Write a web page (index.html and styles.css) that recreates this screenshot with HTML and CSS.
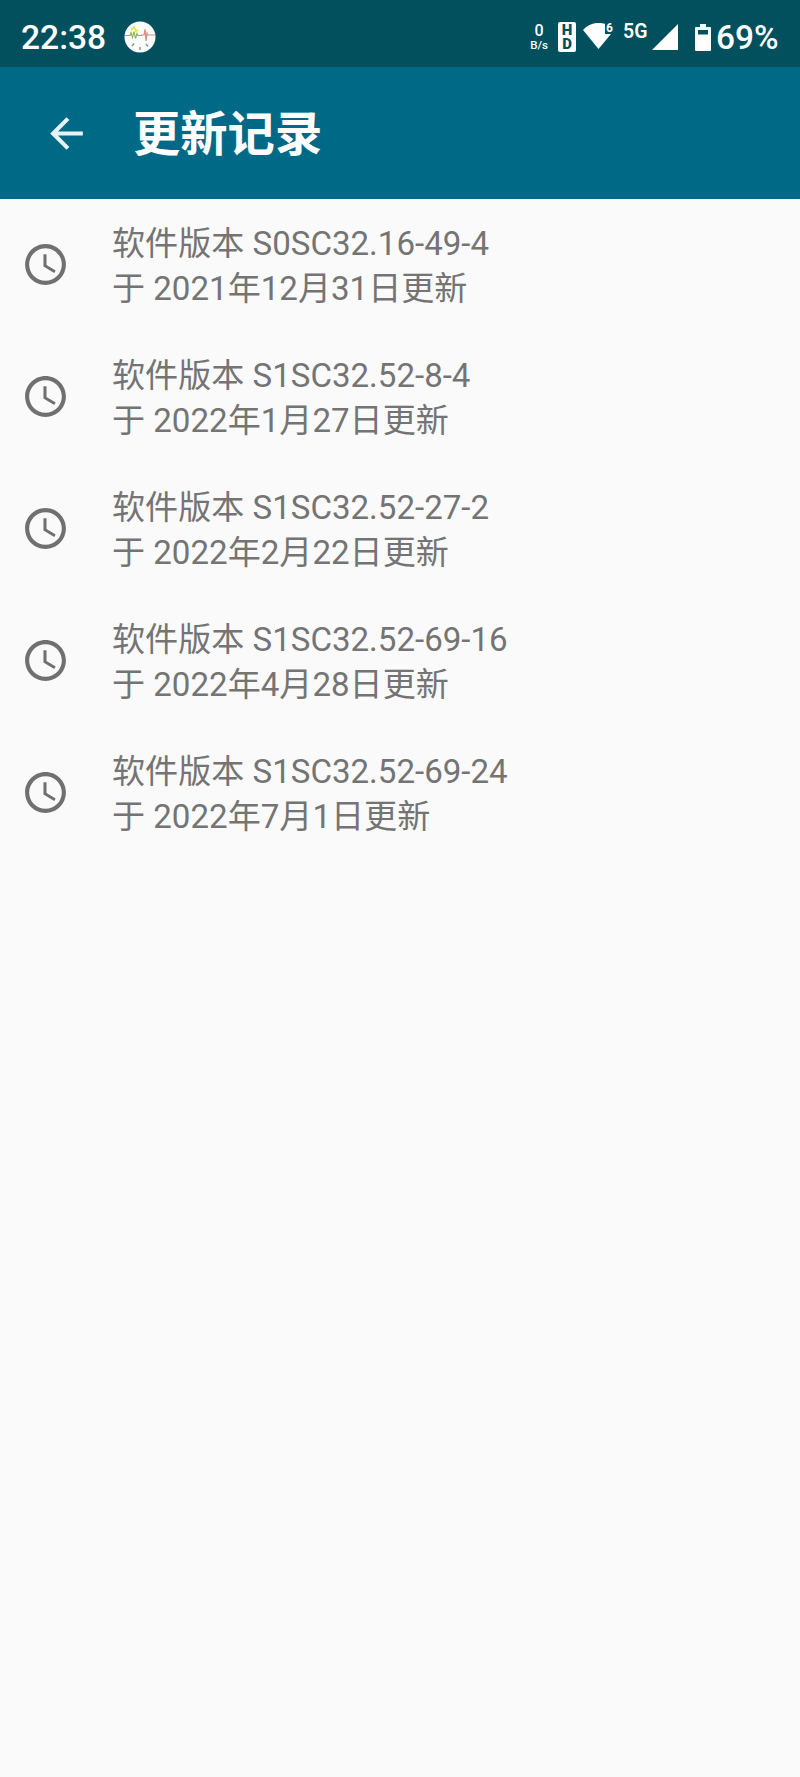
FILE: index.html
```html
<!DOCTYPE html>
<html lang="zh-CN">
<head>
<meta charset="utf-8">
<title>更新记录</title>
<link rel="stylesheet" href="styles.css">
</head>
<body>
<svg width="0" height="0" class="defs">
  <symbol id="clock" viewBox="0 0 24 24">
    <path d="M11.99 2C6.47 2 2 6.48 2 12s4.47 10 9.99 10C17.52 22 22 17.52 22 12S17.52 2 11.99 2zM12 20c-4.42 0-8-3.58-8-8s3.58-8 8-8 8 3.58 8 8-3.58 8-8 8z"/>
    <path d="M12.5 7H11v6l5.25 3.15.75-1.23-4.5-2.67z"/>
  </symbol>
</svg>
<header class="status-bar">
  <span class="time">22:38</span>
  <svg class="app-dot" viewBox="0 0 32 32">
    <circle cx="16" cy="16" r="15.500" fill="#fafcfa"/>
    <path d="M1 14.500h5l1-3 1.500 5 1.500-6 1.500 7 1.500-5 1 2h4" fill="none" stroke="#8fb54a" stroke-width="1.100"/>
    <path d="M7 9l3-3 2 4 2-1" fill="none" stroke="#e3ea3c" stroke-width="1.800"/>
    <path d="M17 14h3l1-6 1 12 1-8 1 2h7.500" fill="none" stroke="#d98c8a" stroke-width="1.200"/>
    <path d="M8 25l2-2.500M16 26v3M22 23l2 2.500" stroke="#8b979a" stroke-width="1.500"/>
  </svg>
  <span class="speed"><b>0</b><i>B/s</i></span>
  <span class="hd"><b>H</b><b>D</b></span>
  <span class="wifi">
    <svg viewBox="0 0 32 28"><path d="M0 7C7-1 16-1 23 1v10h5L15.500 26z" fill="#fff"/></svg>
    <b>6</b>
  </span>
  <span class="network">5G</span>
  <svg class="signal" viewBox="0 0 26 26"><path d="M26 0v26H0z" fill="#fff"/></svg>
  <svg class="battery" viewBox="0 0 16 27"><path fill="#fff" fill-rule="evenodd" d="M5 0h6v3h4q1 0 1 1v22q0 1-1 1H1q-1 0-1-1V4q0-1 1-1h4zM3 6v4.500h10V6z"/></svg>
  <span class="percent">69%</span>
</header>
<nav class="app-bar">
  <svg class="back" viewBox="0 0 24 24"><path d="M20 11H7.830l5.590-5.590L12 4l-8 8 8 8 1.410-1.410L7.830 13H20v-2z"/></svg>
  <h1 class="title">更新记录</h1>
</nav>
<main class="list">
  <section class="row"><svg class="clock"><use href="#clock"/></svg><p class="text">软件版本 S0SC32.16-49-4<br>于 2021年12月31日更新</p></section>
  <section class="row"><svg class="clock"><use href="#clock"/></svg><p class="text">软件版本 S1SC32.52-8-4<br>于 2022年1月27日更新</p></section>
  <section class="row"><svg class="clock"><use href="#clock"/></svg><p class="text">软件版本 S1SC32.52-27-2<br>于 2022年2月22日更新</p></section>
  <section class="row"><svg class="clock"><use href="#clock"/></svg><p class="text">软件版本 S1SC32.52-69-16<br>于 2022年4月28日更新</p></section>
  <section class="row"><svg class="clock"><use href="#clock"/></svg><p class="text">软件版本 S1SC32.52-69-24<br>于 2022年7月1日更新</p></section>
</main>
</body>
</html>
```

FILE: styles.css
```css
* { box-sizing: border-box; }
body {
  margin: 0;
  min-height: 1777px;
  background: #fafafa;
  font-family: Roboto, "Noto Sans CJK SC", sans-serif;
}
.defs { display: block; }
.status-bar {
  display: flex;
  align-items: center;
  height: 67px;
  padding: 8px 0 0 20px;
  background: #02505d;
  color: #fff;
}
.time {
  width: 104px;
  padding-left: 1px;
  font-size: 33.6px;
  font-weight: 500;
  line-height: 40px;
}
.app-dot { width: 32px; height: 32px; margin-top: -1px; }
.speed {
  display: flex;
  flex-direction: column;
  align-items: center;
  width: 22px;
  margin-left: 372px;
  font-weight: 500;
}
.speed b { font-size: 16px; line-height: 16px; font-weight: 500; }
.speed i { font-size: 11.5px; line-height: 13px; font-style: normal; }
.hd {
  display: flex;
  flex-direction: column;
  align-items: center;
  width: 18px;
  height: 30px;
  margin: -1px 0 0 8px;
  padding-top: 1px;
  border-radius: 2px;
  background: #fff;
  color: #02505d;
}
.hd b { font-size: 15px; line-height: 14px; font-weight: 900; }
.wifi {
  position: relative;
  width: 32px;
  height: 28px;
  margin: -2px 0 0 7px;
}
.wifi svg { display: block; width: 32px; height: 28px; }
.wifi b {
  position: absolute;
  top: 0;
  right: 2px;
  padding-left: 1px;
  background: #02505d;
  font-size: 12px;
  line-height: 11px;
}
.network {
  width: 29px;
  margin: -12px 0 0 8px;
  font-size: 19.5px;
  line-height: 20px;
  font-weight: 600;
}
.signal { width: 26px; height: 26px; margin-top: -1px; }
.battery { width: 16px; height: 27px; margin: -1px 0 0 17px; }
.percent {
  margin-left: 5px;
  font-size: 33.4px;
  line-height: 40px;
  font-weight: 500;
}
.app-bar {
  display: flex;
  align-items: center;
  height: 132px;
  padding-left: 42px;
  background: #006a86;
}
.back { width: 49px; height: 49px; fill: #e6f4fa; }
.title {
  margin: 3px 0 0 42px;
  color: #fff;
  font-size: 47.3px;
  line-height: 60px;
  font-weight: 700;
}
.row {
  display: flex;
  align-items: center;
  height: 131.8px;
  padding-left: 21px;
}
.clock { width: 49px; height: 49px; fill: #707070; }
.text {
  margin: 3px 0 0 42px;
  color: #747474;
  font-size: 33.1px;
  line-height: 45px;
  white-space: nowrap;
}
```
